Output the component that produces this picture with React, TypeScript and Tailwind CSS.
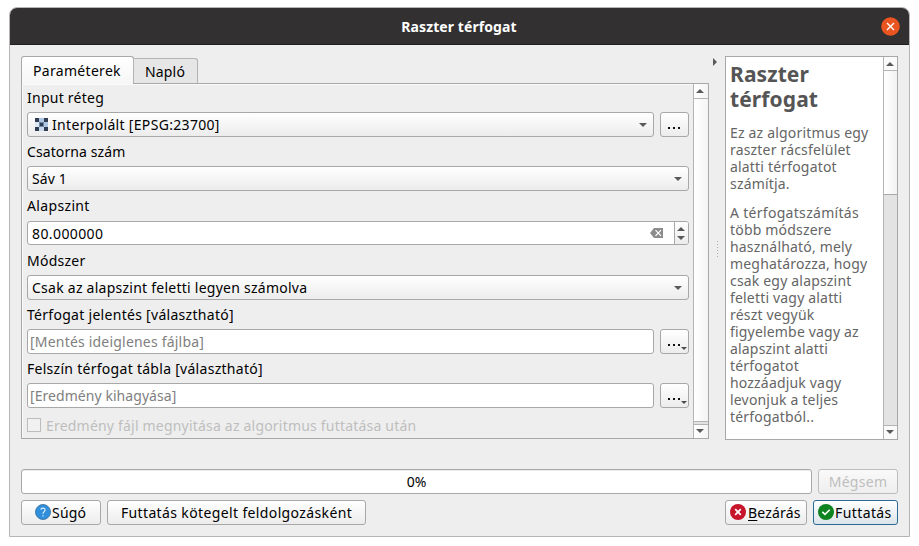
import type { ReactNode } from 'react';

const raised = 'rounded-[3px] border border-[#a8a8a8] bg-linear-to-b from-white to-[#ececec]';

function Caret({ up = false, className = '' }: { up?: boolean; className?: string }) {
  return (
    <svg className={className} width="8" height="4" viewBox="0 0 8 4" fill="#5a5a5a">
      <path d={up ? 'M4 0 L8 4 H0 Z' : 'M0 0 H8 L4 4 Z'} />
    </svg>
  );
}

function Label({ className, children }: { className: string; children: ReactNode }) {
  return <div className={`flex items-center ${className}`}>{children}</div>;
}

function Combo({ className = '', children }: { className?: string; children: ReactNode }) {
  return (
    <div className={`flex h-[25px] items-center justify-between pl-1 pr-[6px] ${raised} ${className}`}>
      {children}
      <Caret />
    </div>
  );
}

function Dots({ menu = false }: { menu?: boolean }) {
  return (
    <button className={`relative flex h-[25px] w-[29px] shrink-0 items-center justify-center ${raised}`}>
      <svg width="13" height="2" viewBox="0 0 13 2" className="mt-[7px]" fill="#111">
        <rect x="0" width="2" height="2" />
        <rect x="5" width="2" height="2" />
        <rect x="10" width="2" height="2" />
      </svg>
      {menu && (
        <svg className="absolute bottom-[3px] right-[1px]" width="6" height="3" viewBox="0 0 6 3" fill="#4d4d4d">
          <path d="M0 0 H6 L3 3 Z" />
        </svg>
      )}
    </button>
  );
}

function OutputRow({ children }: { children: ReactNode }) {
  return (
    <div className="flex gap-[6px]">
      <div className="flex h-[25px] flex-1 items-center rounded-[3px] border border-[#a8a8a8] bg-white pl-[2px] text-[#808080]">
        {children}
      </div>
      <Dots menu />
    </div>
  );
}

function RasterIcon() {
  return (
    <svg width="13" height="13" viewBox="0 0 13 13" shapeRendering="crispEdges">
      <rect width="13" height="13" fill="#afc6e3" />
      <rect width="4" height="4" fill="#2f3c52" />
      <rect x="9" width="4" height="4" fill="#2f3c52" />
      <rect y="4" width="4" height="5" fill="#dde8f4" />
      <rect x="4" y="4" width="5" height="5" fill="#6f88a8" />
      <rect x="5" y="5" width="3" height="3" fill="#2f3c52" />
      <rect x="4" y="9" width="5" height="4" fill="#c9daee" />
      <rect y="9" width="4" height="4" fill="#2f3c52" />
      <rect x="9" y="9" width="4" height="4" fill="#2f3c52" />
    </svg>
  );
}

function TitleBar() {
  return (
    <header className="flex h-[37px] items-center border-b border-[#1f1f1f] bg-[#333031] pr-[9px]">
      <div className="flex-1 pl-[27px] text-center font-bold tracking-[0.08px] text-white">Raszter térfogat</div>
      <svg width="19" height="19" viewBox="0 0 19 19">
        <circle cx="9.5" cy="9.5" r="9.3" fill="#e95420" />
        <path d="M6 6 L13 13 M13 6 L6 13" stroke="#fff" strokeWidth="1.4" />
      </svg>
    </header>
  );
}

function Parameters() {
  return (
    <section className="flex w-[688px] flex-col">
      <div className="z-10 -mb-px flex h-[28px] items-end">
        <div className="flex h-[28px] w-[113px] items-center justify-center rounded-t-[3px] border border-b-0 border-[#a8a8a8] bg-linear-to-b from-white to-[#f6f6f6] pb-px pr-px tracking-[0.3px]">
          Paraméterek
        </div>
        <div className="-ml-px mb-px flex h-[25px] w-[65px] items-center justify-center rounded-tr-[3px] border border-b-0 border-[#b4b4b4] bg-[#e6e6e6] pr-px tracking-[0.2px]">
          Napló
        </div>
      </div>
      <div className="flex h-[356px] border border-[#a8a8a8] shadow-[inset_1px_1px_0_#fafafa]">
        <div className="flex flex-1 flex-col pl-[5px] pr-1">
          <Label className="h-[28px] pb-[2px] tracking-[0.25px]">Input réteg</Label>
          <div className="flex gap-[6px]">
            <Combo className="flex-1">
              <span className="flex items-center gap-1 pl-[3px] tracking-[0.32px]">
                <RasterIcon />
                Interpolált [EPSG:23700]
              </span>
            </Combo>
            <Dots />
          </div>
          <Label className="h-[29px] tracking-[0.1px]">Csatorna szám</Label>
          <Combo className="tracking-[0.1px]">Sáv 1</Combo>
          <Label className="h-[30px] pb-[2px] tracking-[0.35px]">Alapszint</Label>
          <div className="flex h-[24px] overflow-hidden rounded-[3px] border border-[#a8a8a8] bg-white">
            <div className="flex flex-1 items-center justify-between pl-1 pr-[11px] tracking-[0.4px]">
              80.000000
              <svg width="13" height="10" viewBox="0 0 13 10">
                <path d="M0 5 L4 0 H13 V10 H4 Z" fill="#8c8c8c" />
                <path d="M5.5 2.2 L11 7.8 M11 2.2 L5.5 7.8" stroke="#fff" strokeWidth="1.2" />
              </svg>
            </div>
            <div className="flex w-[14px] flex-col items-center justify-center gap-[5px] border-l border-[#a8a8a8] bg-linear-to-b from-white to-[#ececec] pr-px">
              <Caret up />
              <Caret />
            </div>
          </div>
          <Label className="h-[30px] tracking-[0.25px]">Módszer</Label>
          <Combo className="tracking-[0.25px]">Csak az alapszint feletti legyen számolva</Combo>
          <Label className="h-[29px] tracking-[0.29px]">Térfogat jelentés [választható]</Label>
          <OutputRow>
            <span className="tracking-[0.2px]">[Mentés ideiglenes fájlba]</span>
          </OutputRow>
          <Label className="h-[29px] tracking-[0.28px]">Felszín térfogat tábla [választható]</Label>
          <OutputRow>
            <span className="tracking-[0.06px]">[Eredmény kihagyása]</span>
          </OutputRow>
          <div className="mt-[10px] flex h-[14px] items-center gap-[5px] tracking-[0.2px] text-[#bebebe]">
            <span className="size-[14px] border border-[#bdbdbd] bg-[#f1f1f1]" />
            Eredmény fájl megnyitása az algoritmus futtatása után
          </div>
        </div>
        <div className="flex w-[15px] flex-col border-l border-[#b4b4b4] bg-linear-to-r from-white to-[#f4f4f4]">
          <div className="flex h-[15px] items-center justify-center border-b border-[#b4b4b4] pr-[2px]">
            <Caret up />
          </div>
          <div className="flex-1 border-b border-[#b4b4b4]" />
          <div className="h-[3px] border-b border-[#b4b4b4] bg-[#e2e2e2]" />
          <div className="flex h-[13px] items-center justify-center pb-[2px] pr-[2px]">
            <Caret />
          </div>
        </div>
      </div>
    </section>
  );
}

function Splitter() {
  return (
    <div className="flex w-4 flex-col items-center">
      <svg className="mr-[4px] mt-[2px]" width="4" height="8" viewBox="0 0 4 8" fill="#5a5a5a">
        <path d="M0 0 L4 4 L0 8 Z" />
      </svg>
      <svg className="ml-[2px] mt-[174px]" width="2" height="18" viewBox="0 0 2 18" fill="#b0b0b0">
        {[0, 3, 6, 9, 12, 15].map((y) => (
          <rect key={y} y={y + 1} width="1" height="1" />
        ))}
      </svg>
    </div>
  );
}

function Help() {
  return (
    <aside className="flex h-[384px] w-[173px] border border-[#a8a8a8] bg-white">
      <div className="flex-1 whitespace-nowrap pl-1 leading-[17px] tracking-[0.18px] text-[#656565]">
        <h1 className="mt-[5px] text-[21px] font-bold leading-[25px] tracking-[0.1px] text-[#555]">
          Raszter
          <br />
          térfogat
        </h1>
        <p className="mt-[12px]">
          Ez az algoritmus egy
          <br />
          raszter rácsfelület
          <br />
          alatti térfogatot
          <br />
          számítja.
        </p>
        <p className="mt-[12px]">
          <span className="tracking-[0.3px]">A térfogatszámítás</span>
          <br />
          több módszere
          <br />
          használható, mely
          <br />
          meghatározza, hogy
          <br />
          csak egy alapszint
          <br />
          feletti vagy alatti
          <br />
          részt vegyük
          <br />
          figyelembe vagy az
          <br />
          alapszint alatti
          <br />
          térfogatot
          <br />
          hozzáadjuk vagy
          <br />
          levonjuk a teljes
          <br />
          térfogatból..
        </p>
      </div>
      <div className="flex w-[14px] flex-col border-l border-[#b4b4b4]">
        <div className="flex h-[14px] items-center justify-center border-b border-[#b4b4b4] bg-[#fafafa] pr-px">
          <Caret up />
        </div>
        <div className="h-[124px] border-b border-[#a8a8a8] bg-linear-to-r from-white to-[#f2f2f2]" />
        <div className="flex-1 bg-[#e3e3e3]" />
        <div className="flex h-[14px] items-center justify-center border-t border-[#b4b4b4] bg-[#fafafa] pb-px pr-px">
          <Caret />
        </div>
      </div>
    </aside>
  );
}

function Footer() {
  return (
    <footer className="mt-[29px] flex flex-col gap-[6px]">
      <div className="flex gap-[6px]">
        <div className="flex h-[25px] w-[791px] items-center justify-center rounded-[3px] border border-[#a8a8a8] bg-white shadow-[inset_0_1px_0_#ececec]">
          0%
        </div>
        <button className="h-[25px] w-[80px] rounded-[3px] border border-[#bdbdbd] bg-linear-to-b from-[#fafafa] to-[#eee] tracking-[0.3px] text-[#bebebe]">
          Mégsem
        </button>
      </div>
      <div className="flex">
        <button className={`flex h-[25px] w-[80px] items-center pl-[13px] tracking-[0.2px] ${raised}`}>
          <svg className="mb-px mr-px" width="16" height="16" viewBox="0 0 16 16">
            <circle cx="8" cy="8" r="7.5" fill="#2f8fdc" stroke="#4a7da8" />
            <path d="M5.9 5.6 C6 3.6 10.2 3.5 10.1 6 C10 7.6 8 7.8 8 9.8 M8 11.2 V12.6" fill="none" stroke="#e4f1fb" strokeWidth="1.2" />
          </svg>
          Súgó
        </button>
        <button className={`ml-[6px] h-[25px] w-[259px] tracking-[0.37px] ${raised}`}>Futtatás kötegelt feldolgozásként</button>
        <button className={`ml-auto flex h-[25px] w-[82px] items-center pl-1 tracking-[0.2px] ${raised}`}>
          <svg className="mb-px mr-[2px]" width="16" height="16" viewBox="0 0 16 16">
            <circle cx="8" cy="8" r="8" fill="#c7162b" />
            <path d="M5.2 5.2 L10.8 10.8 M10.8 5.2 L5.2 10.8" stroke="#fff" strokeWidth="1.7" />
          </svg>
          <span>
            <span className="underline underline-offset-2">B</span>ezárás
          </span>
        </button>
        <button className="ml-[6px] flex h-[25px] w-[85px] items-center rounded-[3px] border border-[#2a6a96] bg-linear-to-b from-white to-[#dce4ea] pl-1 tracking-[0.4px]">
          <svg className="mb-px mr-px" width="16" height="16" viewBox="0 0 16 16">
            <circle cx="8" cy="8" r="8" fill="#0e8420" />
            <path d="M4.3 7.8 L7 10.4 L11.7 5.8" fill="none" stroke="#fff" strokeWidth="1.6" />
          </svg>
          Futtatás
        </button>
      </div>
    </footer>
  );
}

export default function App() {
  return (
    <div className="h-[546px] w-[919px] bg-white pl-[9px] pt-[7px] font-['Noto_Sans',sans-serif] text-[14px] leading-[19px] text-black">
      <div className="h-[530px] w-[901px] overflow-hidden rounded-t-[8px] border border-[#b5b5b5] bg-[#eee]">
        <TitleBar />
        <main className="px-[11px] pt-[11px]">
          <div className="flex">
            <Parameters />
            <Splitter />
            <Help />
          </div>
          <Footer />
        </main>
      </div>
    </div>
  );
}
